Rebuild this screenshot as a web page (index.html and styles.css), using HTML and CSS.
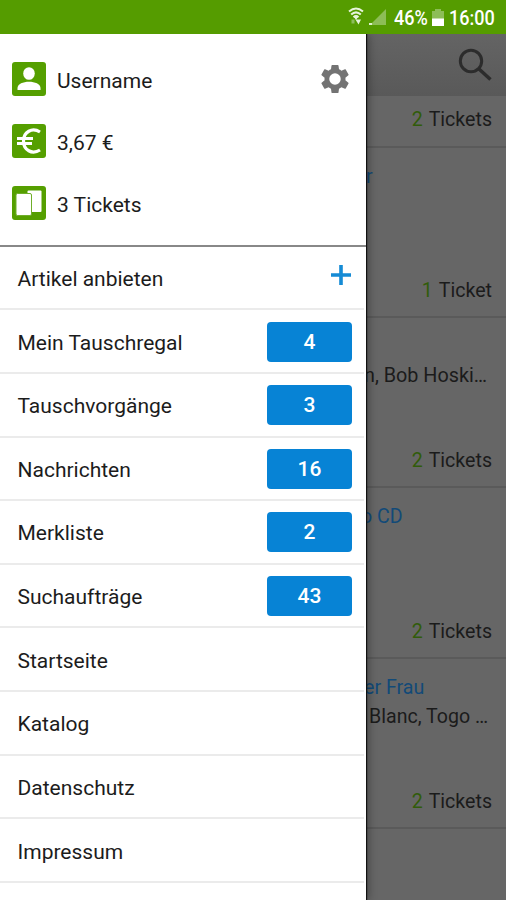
FILE: index.html
```html
<!DOCTYPE html>
<html lang="de">
<head>
<meta charset="utf-8">
<title>Tauschregal</title>
<link rel="stylesheet" href="styles.css">
</head>
<body>
<header class="status">
  <svg class="wifi" viewBox="0 0 16 20"><g fill="none" stroke="#e8f4dc" stroke-width="2"><path d="M1 4.500Q8-1.500 15 4.500M3.200 7.600Q8 3.200 12.800 7.600M5.500 10.200Q8 8 10.500 10.200"/></g><path d="M6 10h4l-2 3z" fill="#e8f4dc"/><path d="M3.500 12.500h3v4h-3z" fill="#8dbd5c"/><path d="M7.500 12.500h5.500l-2.500 5z" fill="#e8f4dc"/></svg>
  <svg class="signal" viewBox="0 0 18 18"><path d="M17 1v16H1z" fill="#8dbd57"/><path d="M0 15h3v2H0z" fill="#dff0cf"/></svg>
  <span class="percent">46%</span>
  <svg class="battery" viewBox="0 0 12 17"><path d="M3 0h6v2h3v8H0V2h3z" fill="#8dbd57"/><path d="M0 9.500h12V17H0z" fill="#fff"/></svg>
  <span class="clock">16:00</span>
</header>
<div class="screen">
  <main class="page">
    <div class="toolbar"><svg class="search" viewBox="0 0 34 34"><circle cx="13" cy="13" r="10.700" fill="none" stroke="#2c2c2c" stroke-width="3"/><path d="M21 21L32.500 31.500" stroke="#2c2c2c" stroke-width="3.500"/></svg></div>
    <article class="card first"><p class="tickets"><b>2</b> Tickets</p></article>
    <article class="card"><h2 class="t1">r</h2><p class="tickets"><b>1</b> Ticket</p></article>
    <article class="card"><h2>&nbsp;</h2><p class="artist a1">n, Bob Hoski…</p><p class="tickets"><b>2</b> Tickets</p></article>
    <article class="card"><h2 class="t2">o CD</h2><p class="tickets"><b>2</b> Tickets</p></article>
    <article class="card"><h2 class="t3">er Frau</h2><p class="artist a2">Blanc, Togo …</p><p class="tickets"><b>2</b> Tickets</p></article>
  </main>
  <nav class="drawer">
    <section class="profile">
      <div class="info">
        <svg class="tile" viewBox="0 0 34 34"><rect width="34" height="34" rx="3" fill="#559f00"/><ellipse cx="17" cy="11.500" rx="5.800" ry="6.300" fill="#fff"/><path d="M5.500 28v-2C5.500 17.500 28.500 17.500 28.500 26v2z" fill="#fff"/></svg>
        <span>Username</span>
        <svg class="gear" viewBox="2 2 20 20"><path fill="#737373" d="M19.430 12.980c.04-.32.07-.64.07-.98s-.03-.66-.07-.98l2.110-1.650c.19-.15.24-.42.12-.64l-2-3.460c-.12-.22-.39-.3-.61-.22l-2.490 1c-.52-.4-1.080-.73-1.690-.98l-.38-2.650C14.460 2.180 14.250 2 14 2h-4c-.25 0-.46.18-.49.42l-.38 2.650c-.61.25-1.170.59-1.690.98l-2.490-1c-.23-.09-.49 0-.61.22l-2 3.460c-.13.22-.07.49.12.64l2.110 1.650c-.04.32-.07.65-.07.98s.03.66.07.98l-2.110 1.650c-.19.15-.24.42-.12.64l2 3.460c.12.22.39.3.61.22l2.490-1c.52.4 1.080.73 1.690.98l.38 2.650c.03.24.24.42.49.42h4c.25 0 .46-.18.49-.42l.38-2.650c.61-.25 1.170-.59 1.690-.98l2.490 1c.23.09.49 0 .61-.22l2-3.460c.12-.22.07-.49-.12-.64zM12 16.100a4.100 4.100 0 1 1 0-8.200 4.100 4.100 0 0 1 0 8.200z"/></svg>
      </div>
      <div class="info">
        <svg class="tile" viewBox="0 0 34 34"><rect width="34" height="34" rx="3" fill="#559f00"/><path d="M28 8C20 3 11.500 8 11.500 17S20 31 28 26M5 14.500H21M5 19.500H20" fill="none" stroke="#fff" stroke-width="3.200"/></svg>
        <span>3,67 €</span>
      </div>
      <div class="info">
        <svg class="tile" viewBox="0 0 34 34"><rect width="34" height="34" rx="3" fill="#559f00"/><rect x="15.500" y="4.500" width="14" height="21.500" rx="1" fill="#fff"/><rect x="4" y="7.500" width="15.500" height="22" rx="1.500" fill="#fff" stroke="#6fae2a" stroke-width="1"/></svg>
        <span>3 Tickets</span>
      </div>
    </section>
    <ul class="menu">
      <li><span>Artikel anbieten</span><svg class="plus" viewBox="0 0 20 20"><path d="M10 0v20M0 10h20" stroke="#158bd5" stroke-width="3.600"/></svg></li>
      <li><span>Mein Tauschregal</span><span class="count">4</span></li>
      <li><span>Tauschvorgänge</span><span class="count">3</span></li>
      <li><span>Nachrichten</span><span class="count">16</span></li>
      <li><span>Merkliste</span><span class="count">2</span></li>
      <li><span>Suchaufträge</span><span class="count">43</span></li>
      <li><span>Startseite</span></li>
      <li><span>Katalog</span></li>
      <li><span>Datenschutz</span></li>
      <li><span>Impressum</span></li>
      <li></li>
    </ul>
  </nav>
</div>
</body>
</html>
```
FILE: styles.css
```css
* { box-sizing: border-box; }
body { margin: 0; height: 900px; overflow: hidden; display: flex; flex-direction: column; font-family: Roboto, "Liberation Sans", sans-serif; font-size: 21px; color: #1c1c1c; }
h2, p, ul { margin: 0; padding: 0; font-weight: 400; }

.status { height: 34px; flex: none; background: #559c00; color: #fff; display: flex; align-items: center; justify-content: flex-end; padding-right: 10px; font-size: 21px; font-weight: 500; }
.wifi { width: 16px; height: 20px; margin-right: 5px; }
.signal { width: 18px; height: 18px; margin-right: 7px; }
.battery { width: 12px; height: 17px; margin: 0 5px 0 4px; }
/* condensed digits */
.percent, .clock { transform: scaleX(.86); transform-origin: left; padding-top: 2px; white-space: nowrap; }
.percent { width: 34px; }
.clock { width: 47px; }

.screen { flex: 1; min-height: 0; position: relative; overflow: hidden; }
.page { height: 100%; background: #666; color: #1b1b1b; }
.toolbar { height: 62px; background: linear-gradient(#646464, #595959); display: flex; justify-content: flex-end; padding: 14px 14px 0 0; }
.search { width: 34px; height: 34px; }
.card { height: 170.200px; border-bottom: 2px solid #5a5a5a; padding: 15px 14px 11px 0; display: flex; flex-direction: column; font-size: 19.600px; line-height: 28px; }
.card.first { height: 52px; padding: 10px 14px 0 0; }
.first .tickets { margin-top: 0; }
.card h2 { font-size: 19.600px; line-height: 28px; color: #124a78; }
.artist { line-height: 30px; }
.tickets { margin-top: auto; text-align: right; word-spacing: 1.500px; }
.tickets b { font-weight: 400; color: #315c0a; }
.t1 { padding-left: 366px; }
.t2 { padding-left: 361px; }
.t3 { padding-left: 364px; }
.a1 { padding-left: 364px; font-size: 19.800px; }
.a2 { padding-left: 369px; }

.drawer { position: absolute; left: 0; top: 0; bottom: 0; width: 366px; background: #fff; box-shadow: 1px 0 1px #111, 3px 0 8px rgba(0,0,0,.3); }
.profile { height: 212.600px; border-bottom: 2px solid #888; padding: 28px 17px 0 12px; display: flex; flex-direction: column; gap: 28px; }
.info { display: flex; align-items: center; height: 34px; gap: 11px; }
.info span { padding-top: 3px; }
.tile { width: 34px; height: 34px; }
.gear { width: 28px; height: 28px; margin-left: auto; }
.menu { list-style: none; margin-right: 2px; }
.menu li { height: 63.650px; border-bottom: 2px solid #ebebeb; padding: 1px 12px 0 17.500px; display: flex; align-items: center; justify-content: space-between; }
.menu li > span:first-child { padding-top: 2px; }
.menu .count { width: 85px; height: 40px; border-radius: 4px; background: #0783d5; color: #fff; font-weight: 500; display: flex; align-items: center; justify-content: center; }
.plus { width: 20px; height: 20px; margin: 0 1px 6px 0; }
```
